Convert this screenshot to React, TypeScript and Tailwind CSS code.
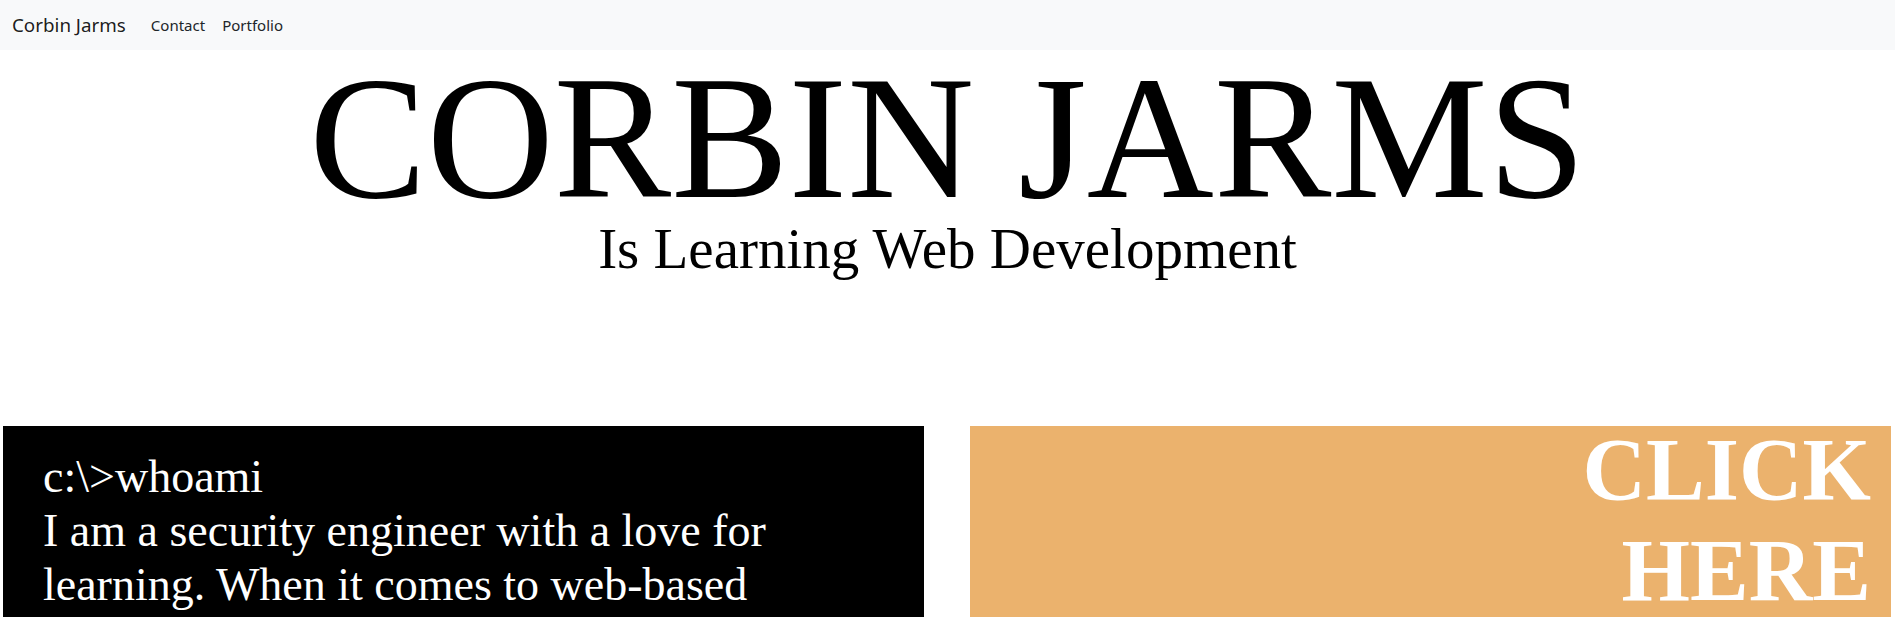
const links = ['Contact', 'Portfolio'];

export default function App() {
  return (
    <div className="min-h-screen bg-white text-black">
      {/* navbar */}
      <nav className="flex h-[50px] items-center bg-[#f8f9fa] px-3 font-['Segoe_UI','Noto_Sans',sans-serif]">
        <a href="#" className="mr-[25px] text-[18.8px] text-[rgba(0,0,0,0.9)]">
          Corbin Jarms
        </a>
        <ul className="flex gap-[17px] text-[15px] text-[#212529]">
          {links.map((l) => (
            <li key={l}>
              <a href="#">{l}</a>
            </li>
          ))}
        </ul>
      </nav>

      {/* hero */}
      <header className="flex flex-col items-center font-['Liberation_Serif',serif]">
        <h1 className="pt-[6px] text-[176px] leading-[164px] font-normal whitespace-nowrap">
          CORBIN JARMS
        </h1>
        <p className="text-[57px] leading-none">Is Learning Web Development</p>
      </header>

      {/* cards */}
      <section className="mt-[149px] grid grid-cols-2 gap-[46px] pl-[3px] pr-[4px] font-['Liberation_Serif',serif] text-white">
        <div className="bg-black pl-[40px] pr-[40px] pt-[24px] pb-10 text-[46px] leading-[54px]">
          <p>c:\&gt;whoami</p>
          <p>
            I am a security engineer with a love for learning. When it comes to web-based
            applications, I have spent most of my time on the breaking side of things, and now
            I am learning how to build them.
          </p>
        </div>
        <a href="#" className="bg-[#ebb26d] pr-5 text-right text-[88px] font-bold leading-[101px]">
          <span className="-mt-[7px] block">
            CLICK
            <br />
            HERE
          </span>
        </a>
      </section>
    </div>
  );
}
